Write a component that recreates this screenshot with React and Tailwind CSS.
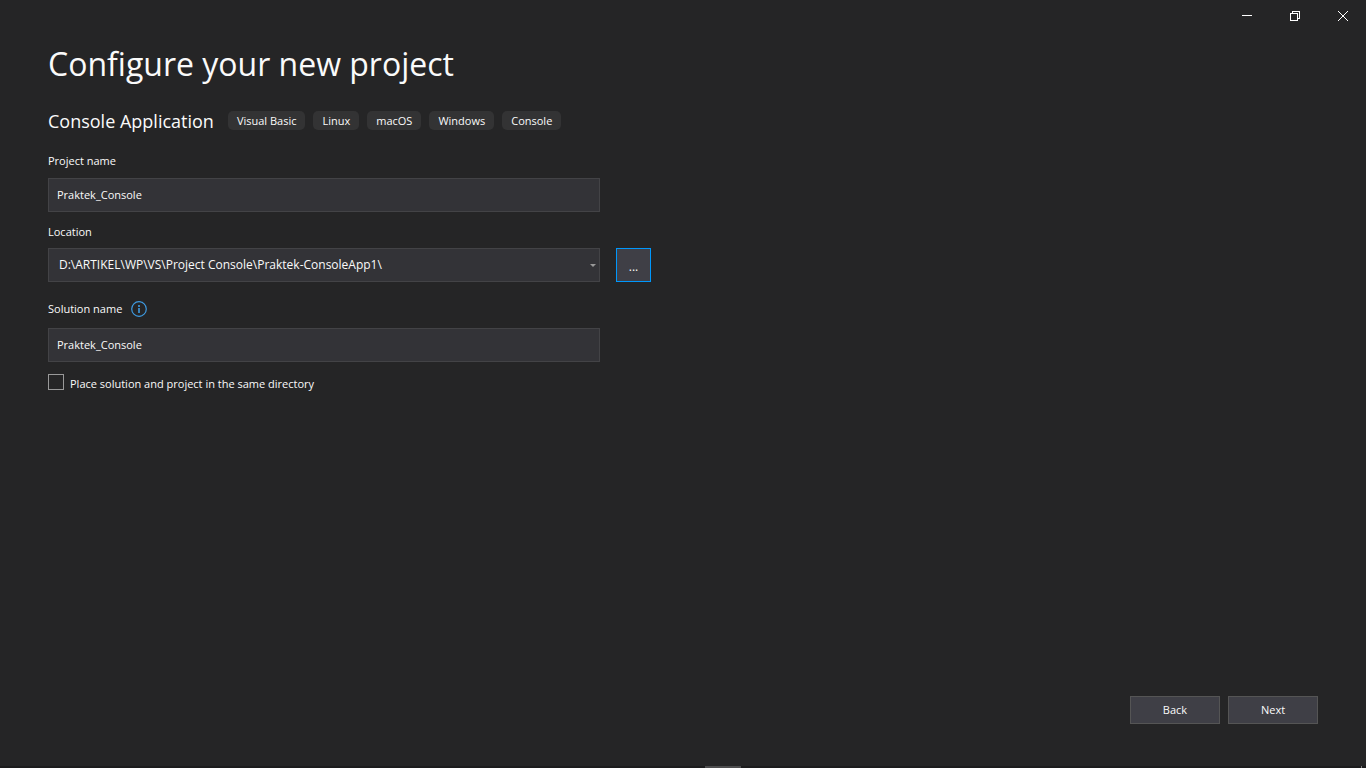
const tags = ['Visual Basic', 'Linux', 'macOS', 'Windows', 'Console']

const fieldClass =
  'block w-full h-[34px] bg-[#333337] border border-[#434346] rounded-none text-[#fafafa] outline-none'

function TitleBar() {
  return (
    <header className="flex justify-end h-8 text-white">
      <button type="button" aria-label="Minimize" className="w-12 pl-0.5 flex items-center justify-center">
        <svg width="10" height="10" viewBox="0 0 10 10" shapeRendering="crispEdges">
          <path d="M0 4h10v1H0z" fill="currentColor" />
        </svg>
      </button>
      <button type="button" aria-label="Restore" className="w-12 pl-0.5 flex items-center justify-center">
        <svg width="10" height="10" viewBox="0 0 10 10" fill="none" stroke="currentColor" shapeRendering="crispEdges">
          <path d="M0.5 2.5h7v7h-7zM2.5 2.5v-2h7v7h-2" />
        </svg>
      </button>
      <button type="button" aria-label="Close" className="w-12 pl-0.5 flex items-center justify-center">
        <svg width="10" height="10" viewBox="0 0 10 10" fill="none" stroke="currentColor">
          <path d="M0 0l10 10M10 0L0 10" />
        </svg>
      </button>
    </header>
  )
}

function InfoIcon() {
  return (
    <svg width="16" height="16" viewBox="0 0 16 16" fill="none" stroke="#3e9ae0">
      <circle cx="8" cy="8" r="7.3" strokeWidth="1.2" />
      <path d="M8 4v2M8 7v5" strokeWidth="1.6" />
    </svg>
  )
}

export default function App() {
  return (
    <div className="min-h-screen flex flex-col bg-[#252526] text-[#fafafa] text-[11px] font-['Open_Sans','Noto_Sans',sans-serif]">
      <TitleBar />

      <main className="flex-1 px-12 pt-2">
        <h1 className="text-[32px] leading-12">Configure your new project</h1>

        <div className="flex flex-wrap items-center gap-3.5 mt-[19px]">
          <h2 className="text-lg leading-6 pt-0.5">Console Application</h2>
          <ul className="flex flex-wrap gap-2">
            {tags.map((tag) => (
              <li key={tag} className="h-[19px] px-[9px] rounded-[5px] bg-[#333334] leading-[19px]">
                {tag}
              </li>
            ))}
          </ul>
        </div>

        <form className="max-w-[552px]">
          <label htmlFor="project" className="block mt-5 leading-4">Project name</label>
          <input id="project" type="text" defaultValue="Praktek_Console" className={`${fieldClass} mt-[9px] px-2 pb-0.5`} />

          <label htmlFor="location" className="block mt-3 leading-4">Location</label>
          <div className="relative mt-2">
            <select id="location" className={`${fieldClass} appearance-none pl-2.5 pr-5 text-xs`}>
              <option>{'D:\\ARTIKEL\\WP\\VS\\Project Console\\Praktek-ConsoleApp1\\'}</option>
            </select>
            <svg width="6" height="3" viewBox="0 0 6 3" className="absolute right-1 top-4 pointer-events-none">
              <path d="M0 0h6L3 3z" fill="#999999" />
            </svg>
            <button
              type="button"
              aria-label="Browse"
              className="absolute left-full top-0 ml-4 w-[35px] h-[34px] pt-1 bg-[#3f3f46] border border-[#0097fb] text-xs"
            >
              ...
            </button>
          </div>

          <div className="flex items-center gap-[9px] mt-[19px]">
            <label htmlFor="solution" className="leading-4">Solution name</label>
            <InfoIcon />
          </div>
          <input id="solution" type="text" defaultValue="Praktek_Console" className={`${fieldClass} mt-[11px] px-2 pb-0.5`} />

          <div className="flex items-start gap-1.5 mt-3">
            <input
              id="same-dir"
              type="checkbox"
              className="appearance-none w-4 h-4 bg-[#252526] border border-[#999999] checked:bg-[#0097fb]"
            />
            <label htmlFor="same-dir" className="leading-5">Place solution and project in the same directory</label>
          </div>
        </form>
      </main>

      <footer className="flex justify-end gap-2 px-12 pb-[42px]">
        <button type="button" className="w-[90px] h-7 bg-[#3f3f46] border border-[#555555]">Back</button>
        <button type="button" className="w-[90px] h-7 bg-[#3f3f46] border border-[#555555]">Next</button>
      </footer>

      <div className="relative flex justify-center h-0.5 pl-20 bg-[#1c1c1d]">
        <div className="w-9 bg-[#4d4d4e]" />
        <div className="absolute right-1 top-0 w-px h-0.5 bg-[#808080]" />
      </div>
    </div>
  )
}
